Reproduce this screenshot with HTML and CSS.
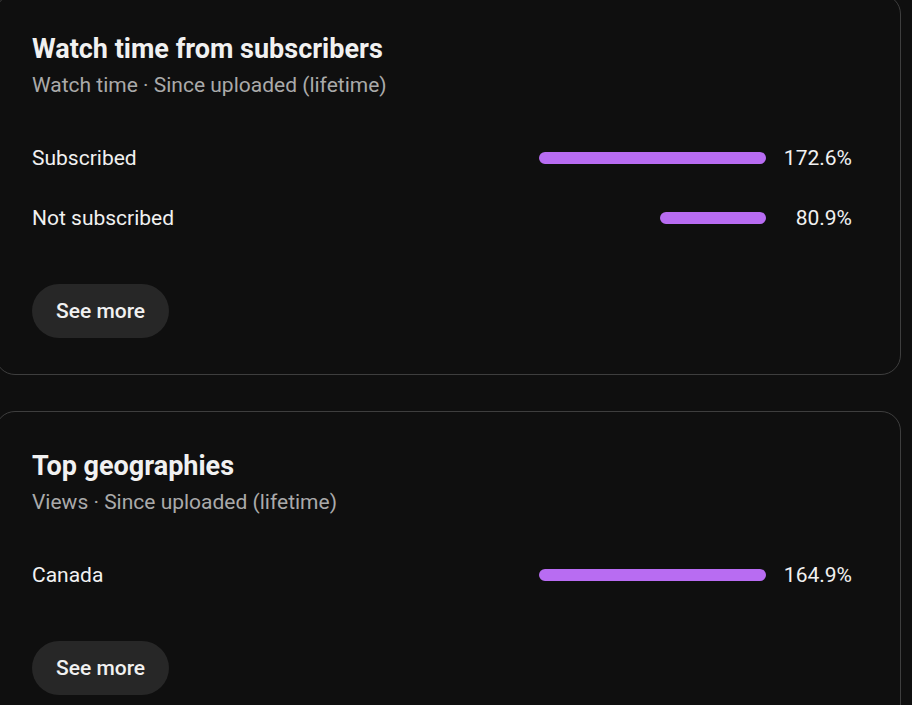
FILE: index.html
```html
<!DOCTYPE html>
<html lang="en">
<head>
<meta charset="utf-8">
<title>Analytics cards</title>
<link rel="stylesheet" href="styles.css">
</head>
<body>
<main class="stack">
  <section class="card">
    <h2 class="card-title">Watch time from subscribers</h2>
    <p class="card-sub">Watch time · Since uploaded (lifetime)</p>
    <ul class="rows">
      <li class="row">
        <span class="label">Subscribed</span>
        <span class="track"><span class="bar" style="width:100%"></span></span>
        <span class="pct">172.6%</span>
      </li>
      <li class="row">
        <span class="label">Not subscribed</span>
        <span class="track"><span class="bar" style="width:46.9%"></span></span>
        <span class="pct">80.9%</span>
      </li>
    </ul>
    <button class="more" type="button">See more</button>
  </section>
  <section class="card">
    <h2 class="card-title">Top geographies</h2>
    <p class="card-sub">Views · Since uploaded (lifetime)</p>
    <ul class="rows">
      <li class="row">
        <span class="label">Canada</span>
        <span class="track"><span class="bar" style="width:100%"></span></span>
        <span class="pct">164.9%</span>
      </li>
    </ul>
    <button class="more" type="button">See more</button>
  </section>
</main>
</body>
</html>
```
FILE: styles.css
```css
html, body {
  margin: 0;
  padding: 0;
  background: #0f0f0f;
  color: #f1f1f1;
  font-family: Roboto, "Liberation Sans", Arial, sans-serif;
  overflow: hidden;
}

.stack {
  display: flex;
  flex-direction: column;
  gap: 36px;
  margin: -6px 0 0 -5px;
  width: 906px;
}

.card {
  border: 1px solid #3e3e3e;
  border-radius: 20px;
  padding: 36px;
  display: flex;
  flex-direction: column;
  align-items: flex-start;
}

.card-title {
  margin: 0;
  font-size: 27px;
  line-height: 36px;
  font-weight: 700;
  color: #f1f1f1;
}

.card-sub {
  margin: 0;
  font-size: 21px;
  line-height: 36px;
  color: #aaaaaa;
}

.rows {
  list-style: none;
  margin: 25px 0 0;
  padding: 0;
  align-self: stretch;
}

.row {
  display: flex;
  align-items: center;
  height: 60px;
}

.label {
  flex: 1;
  font-size: 21px;
  line-height: 30px;
}

.track {
  width: 227px;
  display: flex;
  justify-content: flex-end;
}

.bar {
  height: 12px;
  border-radius: 6px;
  background: #b86cf2;
}

.pct {
  width: 86px;
  text-align: right;
  font-size: 21px;
  line-height: 30px;
  margin-right: 12px;
}

.more {
  margin-top: 36px;
  height: 54px;
  padding: 0 24px;
  border: none;
  border-radius: 27px;
  background: #272727;
  color: #f1f1f1;
  font-family: Roboto, "Liberation Sans", Arial, sans-serif;
  font-size: 21px;
  font-weight: 500;
}
```
